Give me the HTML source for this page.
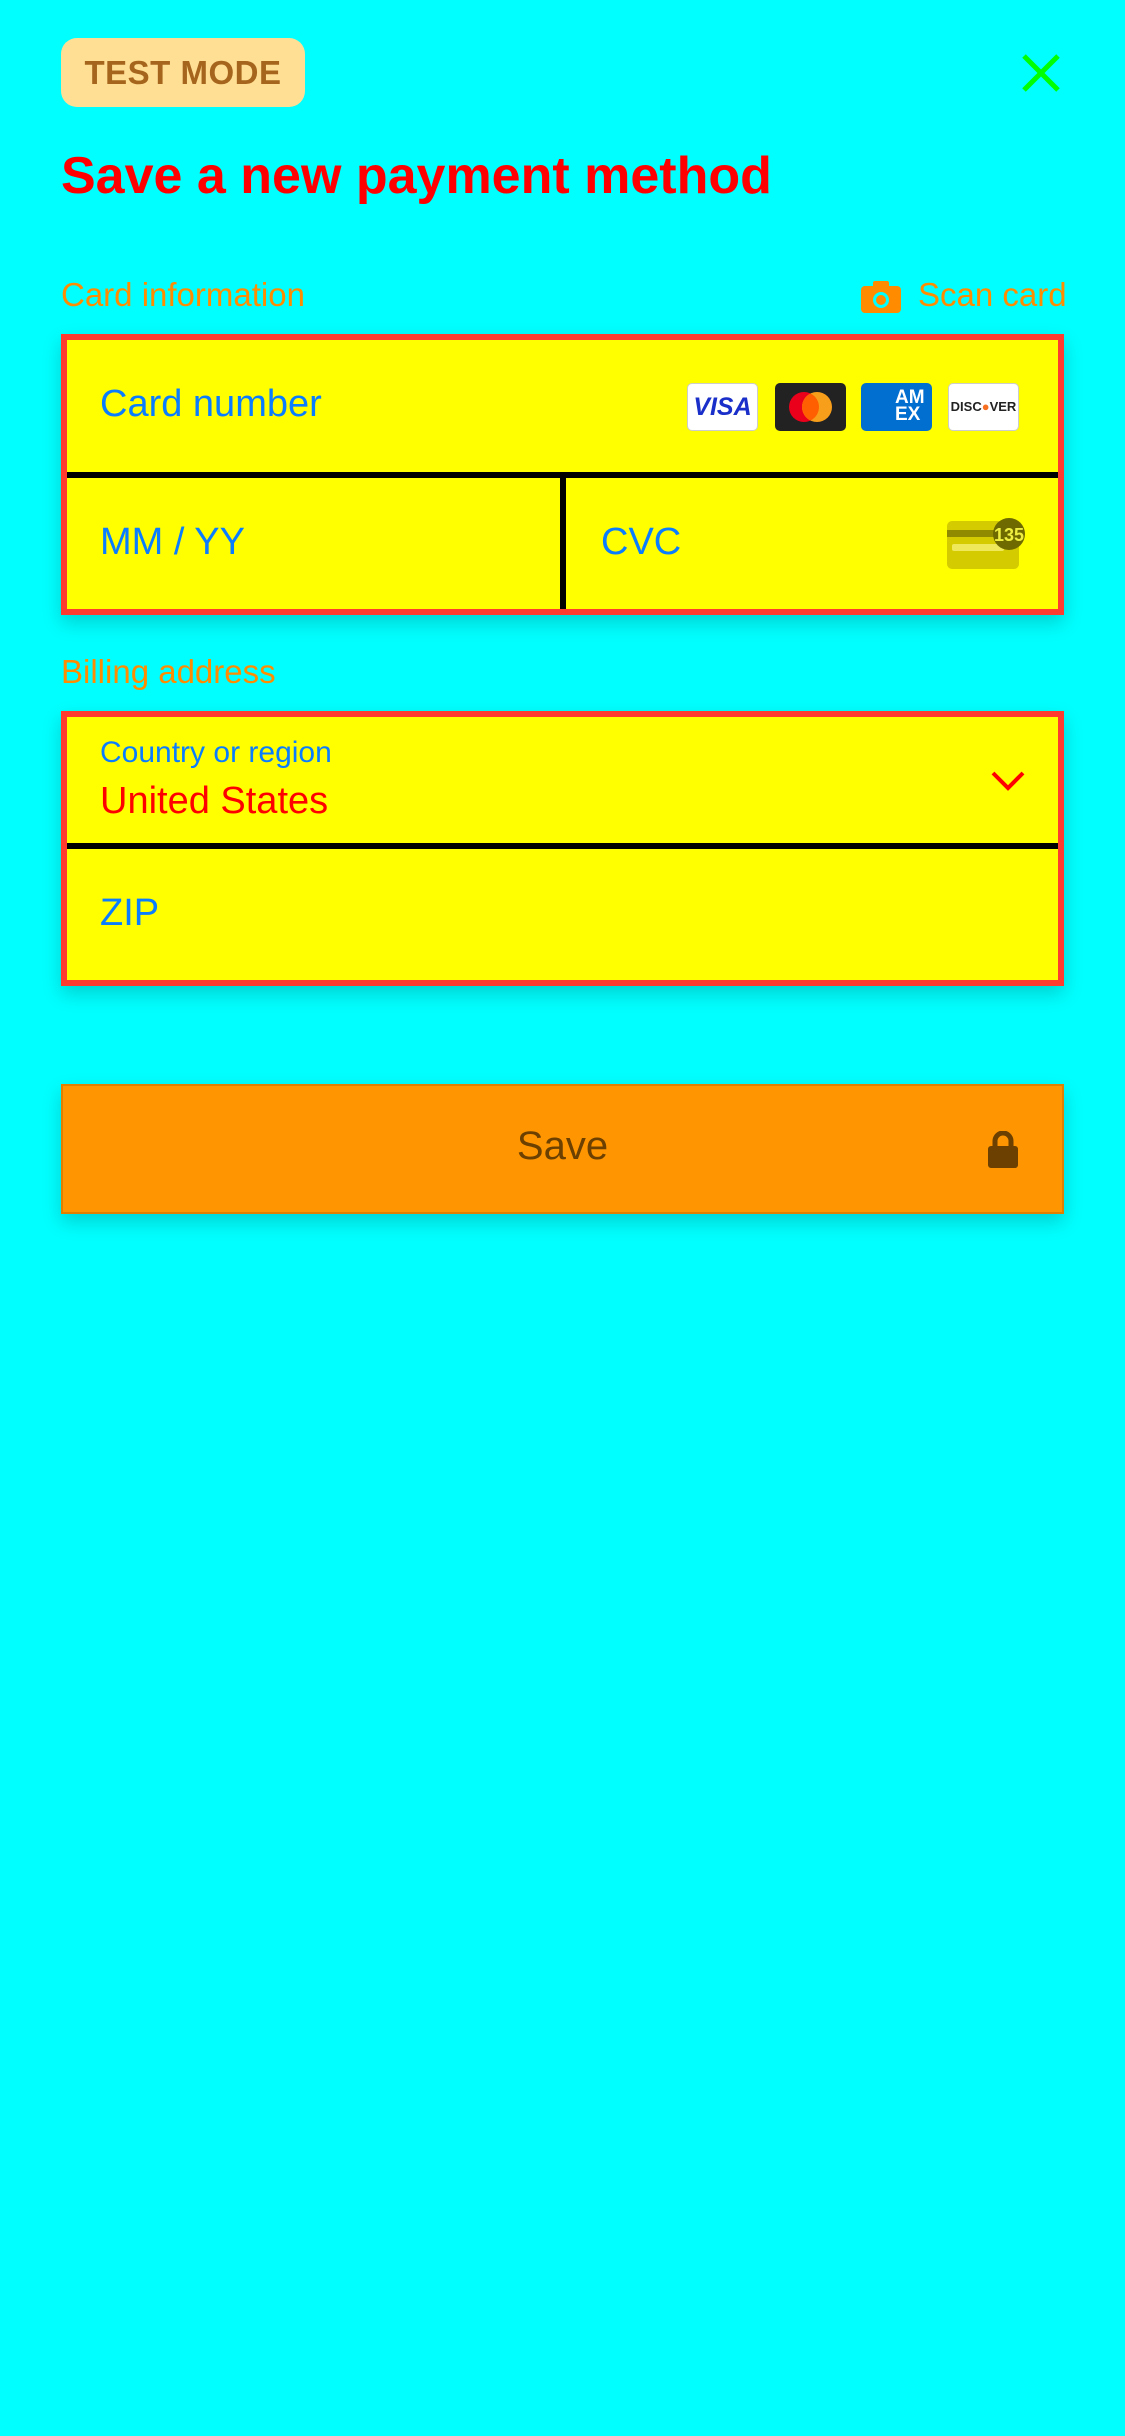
<!DOCTYPE html>
<html><head><meta charset="utf-8"><style>
*{margin:0;padding:0;box-sizing:border-box}
body{width:1125px;height:2436px;background:#00ffff;font-family:"Liberation Sans",sans-serif;position:relative;overflow:hidden}
.a{position:absolute}
.badge{left:61px;top:38px;width:244px;height:69px;background:#ffdf94;border-radius:16px;color:#a5651c;font-weight:bold;font-size:33px;line-height:69px;text-align:center;letter-spacing:0.5px}
.title{left:61px;top:146px;font-size:52px;font-weight:bold;color:#ff0000;letter-spacing:0px;white-space:nowrap}
.lbl{font-size:33px;color:#ff8c00;white-space:nowrap}
.box{left:61px;width:1003px;border:6px solid #ff3b30;background:#ffff00;box-shadow:0 8px 18px rgba(0,0,0,0.18)}
.ph{font-size:38px;color:#0a7cff;white-space:nowrap}
.card{position:absolute;top:383px;width:71px;height:48px;border-radius:5px}
</style></head><body>
<div class="a badge">TEST MODE</div>
<svg class="a" style="left:1021px;top:53px" width="40" height="40" viewBox="0 0 40 40"><path d="M3 3L37 37M37 3L3 37" stroke="#00ff00" stroke-width="5" fill="none"/></svg>
<div class="a title">Save a new payment method</div>
<div class="a lbl" style="left:61px;top:276px">Card information</div>
<svg class="a" style="left:861px;top:281px" width="40" height="32" viewBox="0 0 40 32"><rect x="0" y="5" width="40" height="27" rx="4" fill="#ff8c00"/><rect x="12" y="0" width="16" height="8" rx="2" fill="#ff8c00"/><circle cx="20" cy="19" r="8" fill="#00ffff"/><circle cx="20" cy="19" r="5" fill="#ff8c00"/></svg>
<div class="a lbl" style="left:918px;top:276px">Scan card</div>

<div class="a box" style="top:334px;height:281px"></div>
<div class="a" style="left:67px;top:472px;width:991px;height:6px;background:#000"></div>
<div class="a" style="left:560px;top:478px;width:6px;height:131px;background:#000"></div>
<div class="a ph" style="left:100px;top:383px">Card number</div>
<div class="card" style="left:687px;background:#fff;border:1px solid #ccc;color:#1a2fc9;font-weight:bold;font-style:italic;font-size:25px;text-align:center;line-height:46px">VISA</div>
<div class="card" style="left:775px;background:#222"><svg width="71" height="48"><circle cx="29" cy="24" r="15" fill="#eb001b"/><circle cx="42" cy="24" r="15" fill="#f79e1b"/><path d="M35.5 10.5a15 15 0 0 1 0 27a15 15 0 0 1 0-27z" fill="#ff5f00"/></svg></div>
<div class="card" style="left:861px;background:#016fd0;color:#fff;font-weight:bold;font-size:19px;line-height:17px;padding:6px 0 0 34px">AM<br>EX</div>
<div class="card" style="left:948px;background:#fff;border:1px solid #ccc;font-size:13px;font-weight:bold;color:#222;line-height:46px;text-align:center;overflow:hidden">DISC<span style="color:#f76f20">●</span>VER</div>
<div class="a ph" style="left:100px;top:521px">MM / YY</div>
<div class="a ph" style="left:601px;top:521px">CVC</div>
<svg class="a" style="left:947px;top:518px" width="80" height="52" viewBox="0 0 80 52"><rect x="0" y="3" width="72" height="48" rx="5" fill="#d4cc00"/><rect x="0" y="12" width="72" height="7" fill="#8f8a00"/><rect x="5" y="26" width="52" height="7" rx="2" fill="#eee85a"/><circle cx="62" cy="16" r="16" fill="#6e6a00"/><text x="62" y="23" text-anchor="middle" font-family="Liberation Sans" font-weight="bold" font-size="18" fill="#eeee40">135</text></svg>

<div class="a lbl" style="left:61px;top:653px">Billing address</div>
<div class="a box" style="top:711px;height:275px"></div>
<div class="a" style="left:67px;top:843px;width:991px;height:6px;background:#000"></div>
<div class="a" style="left:100px;top:736px;font-size:30px;color:#0a7cff">Country or region</div>
<div class="a" style="left:100px;top:780px;font-size:38px;color:#ff0000">United States</div>
<svg class="a" style="left:990px;top:770px" width="36" height="22" viewBox="0 0 36 22"><path d="M3 3L18 18L33 3" stroke="#ff0000" stroke-width="4" fill="none"/></svg>
<div class="a ph" style="left:100px;top:892px">ZIP</div>

<div class="a" style="left:61px;top:1084px;width:1003px;height:130px;background:#ff9500;border:2px solid #e07f00;box-shadow:0 8px 18px rgba(0,0,0,0.18)"></div>
<div class="a" style="left:0;width:1125px;top:1124px;text-align:center;font-size:40px;color:#6b4000">Save</div>
<svg class="a" style="left:988px;top:1131px" width="30" height="37" viewBox="0 0 30 37"><path d="M7 16V10a8 8 0 0 1 16 0v6" stroke="#6b4000" stroke-width="5" fill="none"/><rect x="0" y="15" width="30" height="22" rx="3" fill="#6b4000"/></svg>
</body></html>
